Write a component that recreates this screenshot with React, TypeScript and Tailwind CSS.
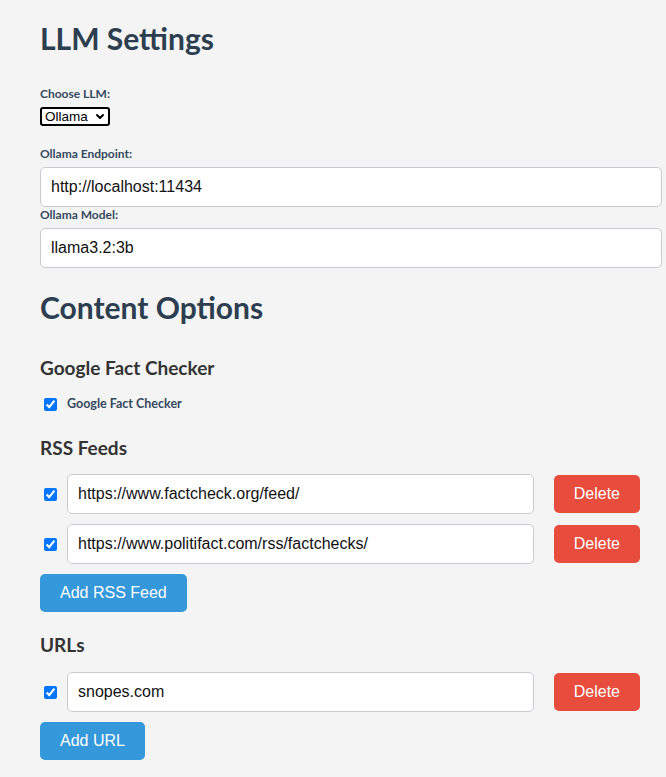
import { useState } from "react";

const heading = "font-['Lato','Noto_Sans',sans-serif] font-bold text-[#2c3e50]";
const subheading = "font-['Lato','Noto_Sans',sans-serif] font-bold text-[#333]";
const body = "font-['Liberation_Sans',Arial,sans-serif]";

function TextField({ value }: { value: string }) {
  return (
    <input
      defaultValue={value}
      className={`${body} block h-10 w-full rounded-[5px] border border-[#c8cbcf] bg-white px-2.5 text-[16px] text-[#111] outline-none`}
    />
  );
}

function Label({ children }: { children: string }) {
  return (
    <label
      className={`${heading} mb-[5px] block text-[12px] leading-4 text-[#34495e]`}
    >
      {children}
    </label>
  );
}

function ListRow({ value }: { value: string }) {
  return (
    <div className="mb-2.5 flex items-center pr-[22px]">
      <input
        type="checkbox"
        defaultChecked
        className="ml-1 mr-2.5 h-[13px] w-[13px] accent-[#0075ff]"
      />
      <div className="flex-1">
        <TextField value={value} />
      </div>
      <button
        className={`${body} ml-5 h-[38px] rounded-[5px] bg-[#e74c3c] px-5 text-[16px] text-white`}
      >
        Delete
      </button>
    </div>
  );
}

function BlueButton({ children }: { children: string }) {
  return (
    <button
      className={`${body} block h-[38px] rounded-[5px] bg-[#3498db] px-5 text-[16px] text-white`}
    >
      {children}
    </button>
  );
}

export default function App() {
  const [llm, setLlm] = useState("ollama");

  return (
    <main className="min-h-[777px] bg-[#f4f4f4] pl-10 pr-1 pt-5 pb-4">
      {/* LLM settings */}
      <h2 className={`${heading} text-[30px] leading-9`}>LLM Settings</h2>

      <div className="mt-[30px]">
        <Label>Choose LLM:</Label>
        <div className="relative w-fit">
          <select
            value={llm}
            onChange={(e) => setLlm(e.target.value)}
            className={`${body} block h-[19px] w-[70px] appearance-none rounded-[3px] border-2 border-black bg-white pl-[3px] text-[13.5px] leading-[15px] text-black outline-none`}
          >
            <option value="ollama">Ollama</option>
            <option value="openai">OpenAI</option>
          </select>
          <svg
            viewBox="0 0 12 12"
            className="pointer-events-none absolute right-[5px] top-[5px] h-[9px] w-[10px]"
          >
            <path
              d="M2 4l4 4 4-4"
              fill="none"
              stroke="#000"
              strokeWidth="2.6"
              strokeLinecap="round"
              strokeLinejoin="round"
            />
          </svg>
        </div>
      </div>

      <div className="mt-5">
        <Label>Ollama Endpoint:</Label>
        <TextField value="http://localhost:11434" />
        <Label>Ollama Model:</Label>
        <TextField value="llama3.2:3b" />
      </div>

      {/* Content options */}
      <h2 className={`${heading} mt-[21px] text-[30px] leading-9`}>
        Content Options
      </h2>

      <h3 className={`${subheading} mt-[31px] text-[19px] leading-6`}>
        Google Fact Checker
      </h3>
      <div className="mt-[16px] flex items-center">
        <input
          type="checkbox"
          defaultChecked
          className="ml-1 mr-2.5 h-[13px] w-[13px] accent-[#0075ff]"
        />
        <span className={`${heading} text-[12.5px] leading-4 text-[#34495e]`}>
          Google Fact Checker
        </span>
      </div>

      <h3 className={`${subheading} mt-[24px] text-[19px] leading-6`}>
        RSS Feeds
      </h3>
      <div className="mt-[14px]">
        <ListRow value="https://www.factcheck.org/feed/" />
        <ListRow value="https://www.politifact.com/rss/factchecks/" />
        <BlueButton>Add RSS Feed</BlueButton>
      </div>

      <h3 className={`${subheading} mt-[21px] text-[19px] leading-6`}>URLs</h3>
      <div className="mt-[15px]">
        <ListRow value="snopes.com" />
        <BlueButton>Add URL</BlueButton>
      </div>
    </main>
  );
}
